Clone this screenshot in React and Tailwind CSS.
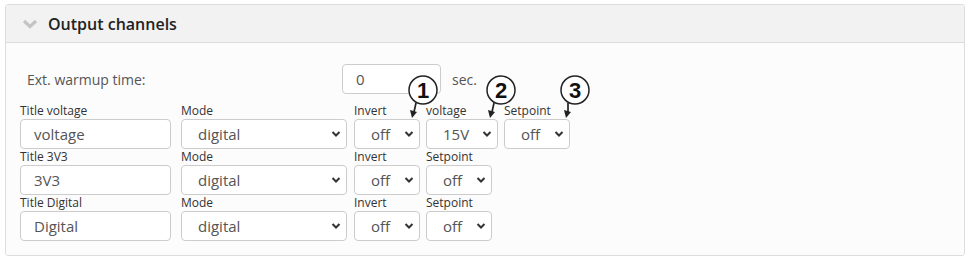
import { useState } from 'react';

const font = { fontFamily: '"Open Sans", "Liberation Sans", sans-serif' };

const Chevron = () => (
  <svg width="10" height="7" viewBox="0 0 10 7" className="pointer-events-none absolute right-[6px] top-1/2 -translate-y-1/2">
    <path d="M1.5 1.5 L5 5 L8.5 1.5" fill="none" stroke="#333" strokeWidth="2" />
  </svg>
);

const Select = ({ width, value, options }) => {
  const [val, setVal] = useState(value);
  return (
    <div className="relative" style={{ width }}>
      <select
        value={val}
        onChange={(e) => setVal(e.target.value)}
        className="h-[30px] w-full appearance-none rounded-[4px] border border-[#ccc] bg-white pl-[16px] pr-[18px] text-[15px] text-[#555] outline-none"
        style={font}
      >
        {options.map((o) => (
          <option key={o}>{o}</option>
        ))}
      </select>
      <Chevron />
    </div>
  );
};

const Field = ({ label, children }) => (
  <div className="flex flex-col">
    <label className="h-[16px] text-[12px] leading-[16px] text-[#333]">{label}</label>
    {children}
  </div>
);

const rows = [
  { title: 'Title voltage', value: 'voltage', voltage: true },
  { title: 'Title 3V3', value: '3V3' },
  { title: 'Title Digital', value: 'Digital' },
];

const Annotation = ({ cx, n, tx }) => (
  <g>
    <circle cx={cx} cy={90} r={14} fill="white" stroke="#222" strokeWidth="1.5" />
    <text x={cx} y={98} textAnchor="middle" fontSize="22" fontWeight="700" fill="#111" fontFamily="Liberation Sans, Arial, sans-serif">
      {n}
    </text>
    <line x1={cx - 7} y1={103} x2={tx + 2} y2={112} stroke="#222" strokeWidth="1.7" />
    <polygon points={`${tx},${118} ${tx - 2},${110} ${tx + 5},${112}`} fill="#222" />
  </g>
);

export default function App() {
  return (
    <div className="relative h-[260px] w-[969px] bg-white pl-[5px] pt-[4px]" style={font}>
      <div className="w-[960px] overflow-hidden rounded-[3px] border border-[#ddd]">
        <div className="flex h-[38px] items-center border-b border-[#ddd] bg-[#f2f2f2]">
          <svg width="16" height="10" viewBox="0 0 16 10" className="ml-[16px]">
            <path d="M2 2 L8 7.5 L14 2" fill="none" stroke="#c4c4c4" strokeWidth="3.2" />
          </svg>
          <span className="ml-[10px] text-[16px] font-semibold text-[#222]">Output channels</span>
        </div>
        <div className="bg-[#fcfcfc] px-[14px] pt-[21px] pb-[14px]">
          <div className="flex items-center">
            <span className="w-[322px] pl-[7px] text-[14px] text-[#555]">Ext. warmup time:</span>
            <input
              defaultValue="0"
              className="h-[30px] w-[99px] rounded-[4px] border border-[#ccc] bg-white px-[13px] text-[15px] text-[#555] outline-none"
              style={font}
            />
            <span className="ml-[11px] text-[14px] text-[#555]">sec.</span>
          </div>
          <div className="mt-[9px] flex flex-col">
            {rows.map((r) => (
              <div key={r.title} className="flex">
                <Field label={r.title}>
                  <input
                    defaultValue={r.value}
                    className="h-[30px] w-[151px] rounded-[4px] border border-[#ccc] bg-white px-[13px] text-[15px] text-[#555] outline-none"
                    style={font}
                  />
                </Field>
                <div className="ml-[10px]">
                  <Field label="Mode">
                    <Select width={166} value="digital" options={['digital', 'analog']} />
                  </Field>
                </div>
                <div className="ml-[7px] flex gap-[6px]">
                  <Field label="Invert">
                    <Select width={66} value="off" options={['off', 'on']} />
                  </Field>
                  {r.voltage && (
                    <Field label="voltage">
                      <Select width={72} value="15V" options={['15V', '12V', '5V']} />
                    </Field>
                  )}
                  <Field label="Setpoint">
                    <Select width={66} value="off" options={['off', 'on']} />
                  </Field>
                </div>
              </div>
            ))}
          </div>
        </div>
      </div>
      <svg width="969" height="260" className="pointer-events-none absolute left-0 top-0">
        <Annotation cx={423} n="1" tx={412} />
        <Annotation cx={501} n="2" tx={490} />
        <Annotation cx={575} n="3" tx={566} />
      </svg>
    </div>
  );
}
